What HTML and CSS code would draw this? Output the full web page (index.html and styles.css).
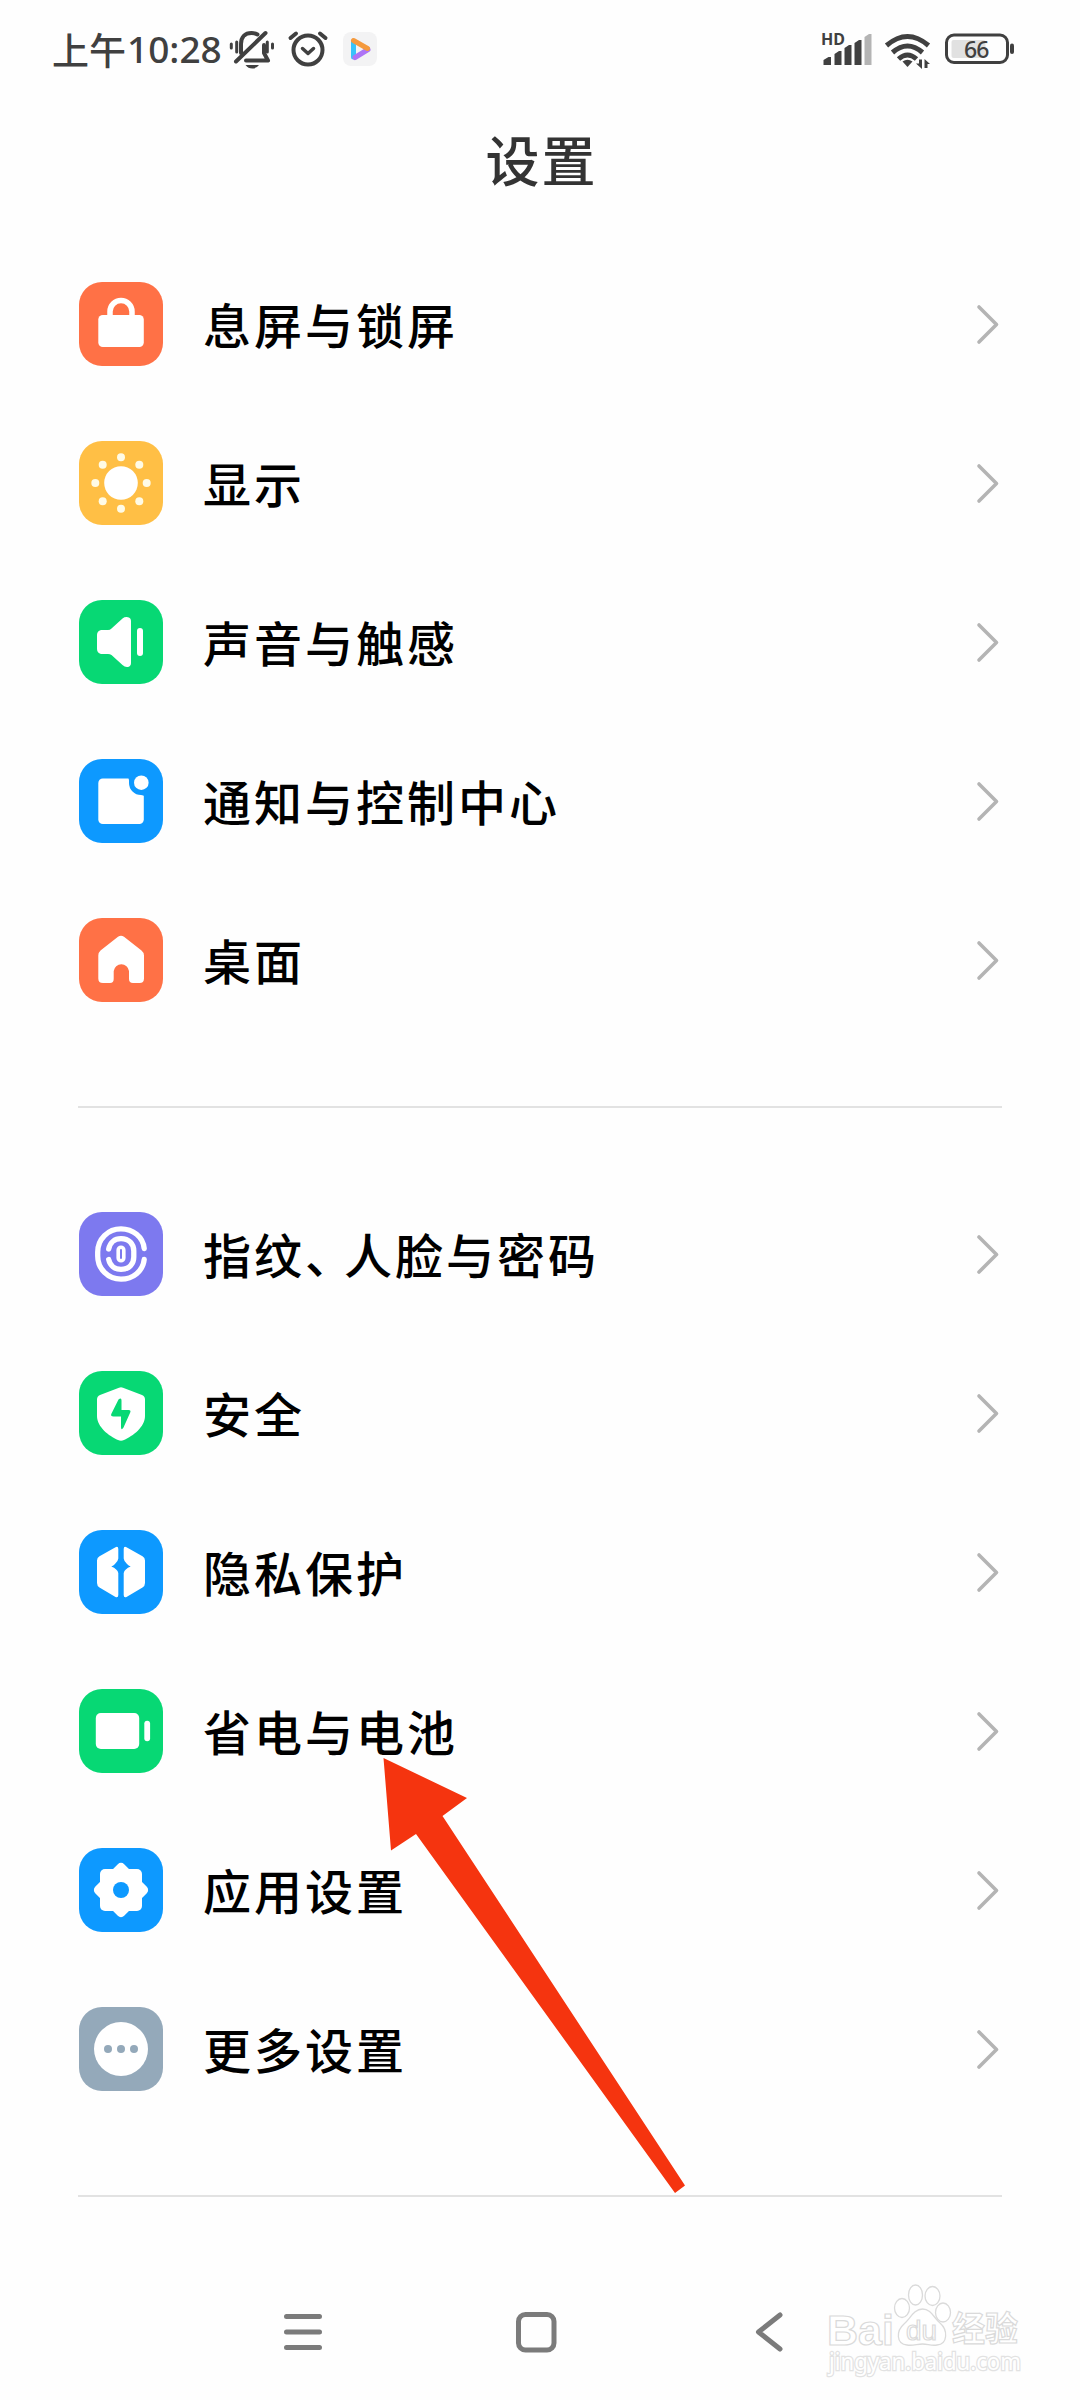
FILE: index.html
```html
<!DOCTYPE html>
<html lang="zh-CN">
<head>
<meta charset="utf-8">
<title>设置</title>
<link rel="stylesheet" href="styles.css">
</head>
<body>
<div class="screen">
  <header class="status">
    <div class="status-left">
      <span class="clock"><span class="ampm">上午</span><span class="digits">10:28</span></span>
      <svg class="i-mute" width="46" height="40" viewBox="0 0 46 40" fill="none" stroke="#404040" stroke-width="4" stroke-linecap="round" stroke-linejoin="round">
        <path d="M12 23V14C12 7 16 3 22.500 3Q26 3 28.500 4.500M35 15V23L39 30.500H17"/>
        <path d="M36.500 3L7 31.500"/>
        <path d="M2.300 14V18M7.700 12V22M38.300 12V22M43.500 14V18" stroke-width="3"/>
        <path d="M16.500 35H30Q27.500 38.500 23.300 38.500T16.500 35Z" fill="#404040" stroke="none"/>
      </svg>
      <svg class="i-alarm" width="40" height="38" viewBox="0 0 40 38" fill="none" stroke="#404040" stroke-linecap="round" stroke-linejoin="round">
        <circle cx="20" cy="20" r="14.500" stroke-width="4"/>
        <path d="M14.500 18.500L20 23.500L25.500 18.500" stroke-width="3.500"/>
        <path d="M2.500 8L8 3.500M37.500 8L32 3.500" stroke-width="4"/>
      </svg>
      <svg class="i-play" width="34" height="34" viewBox="0 0 34 34">
        <rect width="34" height="34" rx="8" fill="#f3f3f4"/>
        <g fill="none" stroke-width="5" stroke-linecap="round">
          <path d="M10.500 9.500V25" stroke="#38c4fa"/>
          <path d="M12 25.500L25 17.500" stroke="#ae74f5"/>
          <path d="M10.500 8.500L24.500 16.500" stroke="#f59a3d"/>
        </g>
      </svg>
    </div>
    <div class="status-right">
      <svg class="i-signal" width="52" height="34" viewBox="0 0 52 34">
        <text class="hd" x="-1" y="12" textLength="24" lengthAdjust="spacingAndGlyphs">HD</text>
        <g fill="#404040">
          <path d="M1.500 32V27L6.500 24H9V32ZM12.500 32V21L17 18H19.500V32ZM22.500 32V15L27 12H29.500V32ZM32.500 32V10L37 7H39.500V32Z"/>
          <path d="M42.500 32V4L47 1H49.500V32Z" fill="#b4b4b4"/>
        </g>
      </svg>
      <svg class="i-wifi" width="48" height="38" viewBox="0 0 48 38" fill="none" stroke="#404040" stroke-width="5">
        <path d="M2.500 13.500Q23.500-4.500 44.500 13.500M8.500 20.500Q23.500 7.500 38.500 20.500M14.500 27Q23.500 19 32.500 27"/>
        <path d="M18.500 29.500Q23.500 26 28.500 29.500L23.500 35Z" fill="#404040" stroke="none"/>
        <path d="M38 27.500V37L32 31.500H35V27.500ZM40.500 36V27L46 32H43.500V36Z" fill="#404040" stroke="none"/>
      </svg>
      <svg class="i-battery" width="70" height="32" viewBox="0 0 70 32">
        <rect x="1.500" y="2" width="61" height="27.500" rx="7.500" fill="none" stroke="#404040" stroke-width="3"/>
        <rect x="6.500" y="7" width="34" height="18" rx="2" fill="#e1e1e1"/>
        <rect x="65" y="10.500" width="4" height="10.500" rx="2" fill="#404040"/>
        <text class="level" x="19" y="24.500" textLength="25.500">66</text>
      </svg>
    </div>
  </header>

  <h1 class="title">设置</h1>

  <main class="list">
    <section class="group">
      <div class="row"><svg class="icon lock" viewBox="0 0 84 84"><rect x="19.300" y="33" width="45.500" height="32" rx="4.500" fill="#fff"/><path d="M31 35V29.500A11 11 0 0 1 53 29.500V35" fill="none" stroke="#fff" stroke-width="5.500"/></svg><span class="label">息屏与锁屏</span><svg class="chev" viewBox="0 0 24 40"><path d="M3 3L20.500 20.500L3 38"/></svg></div>
      <div class="row"><svg class="icon sun" viewBox="0 0 84 84" fill="#fff"><circle cx="42" cy="42" r="16.800"/><g fill="#fffbe6"><circle cx="42" cy="16.300" r="4"/><circle cx="42" cy="67.700" r="4"/><circle cx="16.300" cy="42" r="4"/><circle cx="67.700" cy="42" r="4"/><circle cx="23.700" cy="23.700" r="4"/><circle cx="60.300" cy="23.700" r="4"/><circle cx="23.700" cy="60.300" r="4"/><circle cx="60.300" cy="60.300" r="4"/></g></svg><span class="label">显示</span><svg class="chev" viewBox="0 0 24 40"><path d="M3 3L20.500 20.500L3 38"/></svg></div>
      <div class="row"><svg class="icon green" viewBox="0 0 84 84" fill="#fff"><path d="M22 30H29Q31 30 32.500 28.500L43.500 18.500Q46 16.500 49 17.200Q52 18 52 21V63Q52 66 49 67Q46 67.500 43.500 65L32.500 55Q31 54 29 54H22Q18 53 18 49V35Q18 31 22 30Z"/><rect x="58" y="28" width="6" height="28" rx="3"/></svg><span class="label">声音与触感</span><svg class="chev" viewBox="0 0 24 40"><path d="M3 3L20.500 20.500L3 38"/></svg></div>
      <div class="row"><svg class="icon blue" viewBox="0 0 84 84"><rect x="19.300" y="19.500" width="45.500" height="45.500" rx="4.500" fill="#fff"/><path d="M48.500 18Q50 19 50 21.500V24A12 12 0 0 0 62 36Q64.500 36 66 37.500V18Z" fill="#0d99ff"/><circle cx="62.300" cy="23.700" r="7.300" fill="#fff"/></svg><span class="label">通知与控制中心</span><svg class="chev" viewBox="0 0 24 40"><path d="M3 3L20.500 20.500L3 38"/></svg></div>
      <div class="row"><svg class="icon orange" viewBox="0 0 84 84"><path d="M39 18.800Q42 16.600 45 18.800L62.500 32.500Q65 34.500 65 37.500V60.500Q65 65 60.500 65H54Q50 65 50 61V53A7.700 7.700 0 0 0 34.700 53V61Q34.700 65 31 65H24Q19.300 65 19.300 60.500V37.500Q19.300 34.500 21.500 32.500Z" fill="#fff"/></svg><span class="label">桌面</span><svg class="chev" viewBox="0 0 24 40"><path d="M3 3L20.500 20.500L3 38"/></svg></div>
    </section>
    <section class="group">
      <div class="row"><svg class="icon purple" viewBox="0 0 84 84" fill="none" stroke="#fff" stroke-width="5.300" stroke-linecap="round"><path d="M65.200 36.500C64 25 54 16.800 42 16.800C29 16.800 18.700 27 18.700 40V44C18.700 57 29 67.200 42 67.200C54 67.200 64 59 65.200 47.500"/><path d="M29.700 37C31 30.500 35.500 26.700 42 26.700C50 26.700 54.800 32 54.800 39V45C54.800 52 50 57.300 42 57.300C35.500 57.300 31 53.500 29.700 47.500"/><rect x="39.200" y="35.200" width="5.600" height="13.500" rx="2.800" stroke-width="3.600"/></svg><span class="label">指纹<span class="comma">、</span>人脸与密码</span><svg class="chev" viewBox="0 0 24 40"><path d="M3 3L20.500 20.500L3 38"/></svg></div>
      <div class="row"><svg class="icon green" viewBox="0 0 84 84"><path d="M40 16.800Q42 15.800 44 16.800L63 24Q66 25.200 66 28.500V45C66 56 54 65 45 69Q42 70.500 39 69C30 65 18 56 18 45V28.500Q18 25.200 21 24Z" fill="#fff"/><path d="M39.500 28.500Q42.500 26 42.500 29.500V39H49.500Q52.500 39 51 42L44.500 56.500Q42 60 42 56V45.500H34.500Q31 45.500 32.500 42.500Z" fill="#07d874"/></svg><span class="label">安全</span><svg class="chev" viewBox="0 0 24 40"><path d="M3 3L20.500 20.500L3 38"/></svg></div>
      <div class="row"><svg class="icon blue" viewBox="0 0 84 84" fill="#fff"><path id="half" d="M36.500 17.200Q39.300 16 39.300 19V28.500Q39 31.500 36 34Q34.500 35.500 32.300 36.500Q38.500 39 39.300 43V65Q39.300 68 36.500 67L20.500 57.500Q18 56 18 53V30.500Q18 27.500 20.500 26.200Z"/><use href="#half" transform="translate(84 0) scale(-1 1)"/></svg><span class="label">隐私保护</span><svg class="chev" viewBox="0 0 24 40"><path d="M3 3L20.500 20.500L3 38"/></svg></div>
      <div class="row"><svg class="icon green" viewBox="0 0 84 84" fill="#fff"><rect x="16.800" y="24" width="43.400" height="36" rx="5"/><rect x="65.300" y="31.700" width="5.800" height="20.500" rx="2.900"/></svg><span class="label">省电与电池</span><svg class="chev" viewBox="0 0 24 40"><path d="M3 3L20.500 20.500L3 38"/></svg></div>
      <div class="row"><svg class="icon blue" viewBox="0 0 84 84" fill="#fff"><rect x="21" y="21" width="42" height="42" rx="5"/><rect x="21.500" y="21.500" width="41" height="41" rx="4.500" transform="rotate(45 42 42)"/><circle cx="42" cy="42" r="8" fill="#0d99ff"/></svg><span class="label">应用设置</span><svg class="chev" viewBox="0 0 24 40"><path d="M3 3L20.500 20.500L3 38"/></svg></div>
      <div class="row"><svg class="icon gray" viewBox="0 0 84 84"><circle cx="42" cy="42" r="27" fill="#fff"/><g fill="#94a9ba"><circle cx="29" cy="42" r="4"/><circle cx="42" cy="42" r="4"/><circle cx="55" cy="42" r="4"/></g></svg><span class="label">更多设置</span><svg class="chev" viewBox="0 0 24 40"><path d="M3 3L20.500 20.500L3 38"/></svg></div>
    </section>
  </main>

  <nav class="nav">
    <svg viewBox="0 0 48 48"><path d="M7.500 8.500H40.500M7.500 24H40.500M7.500 39.500H40.500"/></svg>
    <svg viewBox="0 0 48 48"><rect x="6.500" y="6.500" width="35.500" height="35.500" rx="7"/></svg>
    <svg viewBox="0 0 48 48"><path d="M35 7L13.500 24L35 41" stroke-linejoin="round"/></svg>
  </nav>

  <svg class="arrow" width="304" height="438" viewBox="382 1757 304 438"><path d="M383.500 1758L467 1798L442.500 1816L685 2185.500L675 2193L416 1834L391 1850.500Z" fill="#f5340f"/></svg>

  <svg class="mark" width="200" height="100" viewBox="825 2280 200 100">
    <text class="mark-brand" x="827" y="2344.500" textLength="67" lengthAdjust="spacingAndGlyphs">Bai</text>
    <g fill="#fff" stroke="#dadada" stroke-width="1.300">
      <ellipse cx="902" cy="2308" rx="7.500" ry="9.500"/>
      <ellipse cx="915.500" cy="2295" rx="7" ry="10"/>
      <ellipse cx="932.500" cy="2296" rx="7.500" ry="9.500"/>
      <ellipse cx="943" cy="2312.500" rx="7.500" ry="9.500"/>
      <path d="M922.500 2309C931 2309 934 2318 940 2323C948 2330 948 2344 937 2345C931 2346 928 2344 922.500 2344C917 2344 913 2346 907 2345C896 2344 896 2331 904 2324C910 2319 914 2309 922.500 2309Z"/>
    </g>
    <text class="mark-du" x="906" y="2340" textLength="31" lengthAdjust="spacingAndGlyphs">du</text>
    <text class="mark-cn" x="952" y="2341" textLength="66" lengthAdjust="spacingAndGlyphs">经验</text>
    <text class="mark-url" x="829" y="2370" textLength="192" lengthAdjust="spacingAndGlyphs">jingyan.baidu.com</text>
  </svg>
</div>
</body>
</html>
```

FILE: styles.css
```css
* { box-sizing: border-box; }
body {
  margin: 0;
  background: #fefefe;
  font-family: "Noto Sans CJK SC", sans-serif;
}
svg { display: block; flex: none; overflow: visible; }
.screen {
  position: relative;
  width: 1080px;
  height: 2400px;
  overflow: hidden;
  display: flex;
  flex-direction: column;
}
.status {
  height: 100px;
  flex: none;
  display: flex;
  justify-content: space-between;
  padding: 30px 65px 0 52px;
  color: #404040;
}
.status-left, .status-right { display: flex; align-items: flex-start; }
.clock {
  display: flex;
  width: 177px;
  height: 40px;
  line-height: 38px;
  white-space: nowrap;
}
.ampm { font-size: 37px; width: 75px; font-weight: 500; }
.digits {
  font-family: "Noto Sans", sans-serif;
  font-size: 37px;
  font-weight: 500;
}
.i-alarm { margin: 0 0 0 13px; }
.i-play { margin: 2px 0 0 15px; }
.i-signal { margin: 3px 0 0; }
.i-wifi { margin: 2px 0 0 10px; }
.i-battery { margin: 3px 0 0 13px; }
.hd { font: 700 16px "Noto Sans", sans-serif; fill: #404040; }
.level { font: 500 23px "Noto Sans", sans-serif; fill: #404040; }
.title {
  margin: 0;
  height: 120px;
  flex: none;
  padding-left: 3px;
  text-align: center;
  font-size: 54px;
  font-weight: 500;
  line-height: 117px;
  letter-spacing: 2px;
  color: #333;
}
.list { flex: none; padding: 24px 78px 0; }
.group {
  padding: 0 1px;
  border-bottom: 2px solid #e2e2e2;
}
.group:first-child { padding-bottom: 67px; }
.group:last-child { padding-top: 66px; padding-bottom: 67px; }
.row {
  display: flex;
  align-items: center;
  height: 159px;
}
.icon { width: 84px; height: 84px; border-radius: 23px; }
.lock, .orange { background: #ff7146; }
.sun { background: #ffbf45; }
.green { background: #07d874; }
.blue { background: #0d99ff; }
.purple { background: #7d79ef; }
.gray { background: #94a9ba; }
.label {
  flex: 1;
  padding: 0 0 2px 40px;
  font-size: 48px;
  font-weight: 500;
  letter-spacing: 3px;
  line-height: 60px;
  color: #000;
}
.comma { letter-spacing: -9px; }
.chev { width: 24px; height: 40px; margin-right: 1px; }
.chev path {
  fill: none;
  stroke: #b4b4b4;
  stroke-width: 3.6;
  stroke-linecap: round;
  stroke-linejoin: round;
}
.nav {
  display: flex;
  gap: 185px;
  padding: 111px 0 0 279px;
}
.nav svg {
  width: 48px;
  height: 48px;
  fill: none;
  stroke: #7b7b7b;
  stroke-width: 5;
  stroke-linecap: round;
}
.arrow { position: absolute; left: 382px; top: 1757px; }
.mark { position: absolute; left: 825px; top: 2280px; }
.mark text { fill: #fff; stroke: #dadada; stroke-width: 1.2px; }
.mark-brand { font: 700 43px "Liberation Sans", sans-serif; }
.mark-du { font: 400 28px "Liberation Sans", sans-serif; }
.mark-cn { font: 700 34px "Noto Sans CJK SC", sans-serif; }
.mark .mark-url {
  font: 400 23px "Noto Sans", sans-serif;
  stroke: #e2e2e2;
  stroke-width: 2.5px;
  paint-order: stroke;
}
```
